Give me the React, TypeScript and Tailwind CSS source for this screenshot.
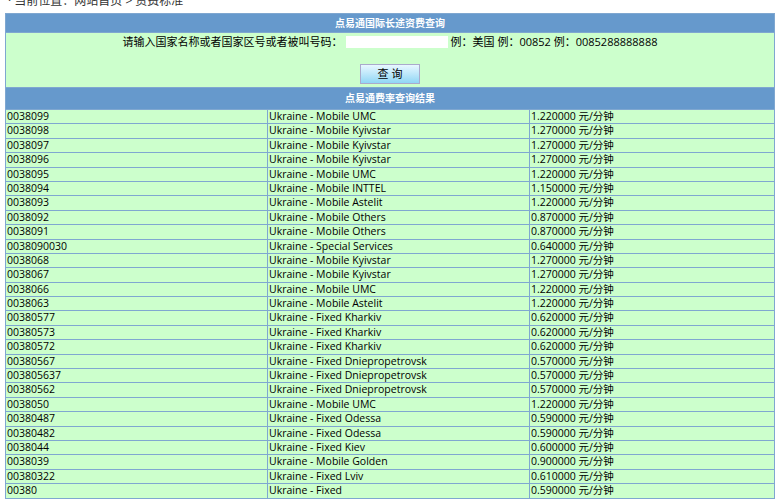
const rows: [string, string, string][] = [
  ["0038099", "Ukraine - Mobile UMC", "1.220000"],
  ["0038098", "Ukraine - Mobile Kyivstar", "1.270000"],
  ["0038097", "Ukraine - Mobile Kyivstar", "1.270000"],
  ["0038096", "Ukraine - Mobile Kyivstar", "1.270000"],
  ["0038095", "Ukraine - Mobile UMC", "1.220000"],
  ["0038094", "Ukraine - Mobile INTTEL", "1.150000"],
  ["0038093", "Ukraine - Mobile Astelit", "1.220000"],
  ["0038092", "Ukraine - Mobile Others", "0.870000"],
  ["0038091", "Ukraine - Mobile Others", "0.870000"],
  ["0038090030", "Ukraine - Special Services", "0.640000"],
  ["0038068", "Ukraine - Mobile Kyivstar", "1.270000"],
  ["0038067", "Ukraine - Mobile Kyivstar", "1.270000"],
  ["0038066", "Ukraine - Mobile UMC", "1.220000"],
  ["0038063", "Ukraine - Mobile Astelit", "1.220000"],
  ["00380577", "Ukraine - Fixed Kharkiv", "0.620000"],
  ["00380573", "Ukraine - Fixed Kharkiv", "0.620000"],
  ["00380572", "Ukraine - Fixed Kharkiv", "0.620000"],
  ["00380567", "Ukraine - Fixed Dniepropetrovsk", "0.570000"],
  ["003805637", "Ukraine - Fixed Dniepropetrovsk", "0.570000"],
  ["00380562", "Ukraine - Fixed Dniepropetrovsk", "0.570000"],
  ["0038050", "Ukraine - Mobile UMC", "1.220000"],
  ["00380487", "Ukraine - Fixed Odessa", "0.590000"],
  ["00380482", "Ukraine - Fixed Odessa", "0.590000"],
  ["0038044", "Ukraine - Fixed Kiev", "0.600000"],
  ["0038039", "Ukraine - Mobile Golden", "0.900000"],
  ["00380322", "Ukraine - Fixed Lviv", "0.610000"],
  ["00380", "Ukraine - Fixed", "0.590000"],
];

export default function App() {
  return (
    <div className="w-[775px] h-[500px] overflow-hidden bg-white text-[11px] text-black" style={{ fontFamily: '"Open Sans", "Noto Sans CJK SC", sans-serif' }}>
      <div className="h-[13px] overflow-hidden">
        <div className="-mt-[6px] pl-[8px] text-[12px] text-[#333] leading-[14px]">· 当前位置：网站首页 &gt; 资费标准</div>
      </div>
      <div className="ml-[5px] border border-[#7fa7d0] bg-[#7fa7d0]">
        <div className="h-[18px] bg-[#6699cc] text-white font-bold flex items-center justify-center text-[10px]">点易通国际长途资费查询</div>
        <div className="h-[55px] bg-[#ccffcc] border-t border-[#7fa7d0] flex flex-col items-center">
          <div className="flex items-center pt-[2px] leading-[14px]">
            <span>请输入国家名称或者国家区号或者被叫号码：</span>
            <span className="w-[102px] h-[12px] bg-white inline-block mx-[3px]"></span>
            <span>例：美国 例：00852 例：0085288888888</span>
          </div>
          <button className="mt-[15px] w-[60px] h-[20px] border border-[#aac] bg-gradient-to-b from-[#e8f8ff] to-[#8fd6f5] text-[11px]">查 询</button>
        </div>
        <div className="h-[21px] mt-px bg-[#6699cc] text-white font-bold flex items-center justify-center text-[10px]">点易通费率查询结果</div>
        {rows.map((r) => (
          <div key={r[0]} className="grid grid-cols-[261px_261px_1fr] h-[13.4px] mt-px gap-px leading-[13px] text-[10.5px] overflow-hidden">
            <div className="bg-[#ccffcc] pl-px">{r[0]}</div>
            <div className="bg-[#ccffcc] pl-px">{r[1]}</div>
            <div className="bg-[#ccffcc] pl-px">{r[2]} 元/分钟</div>
          </div>
        ))}
      </div>
    </div>
  );
}
